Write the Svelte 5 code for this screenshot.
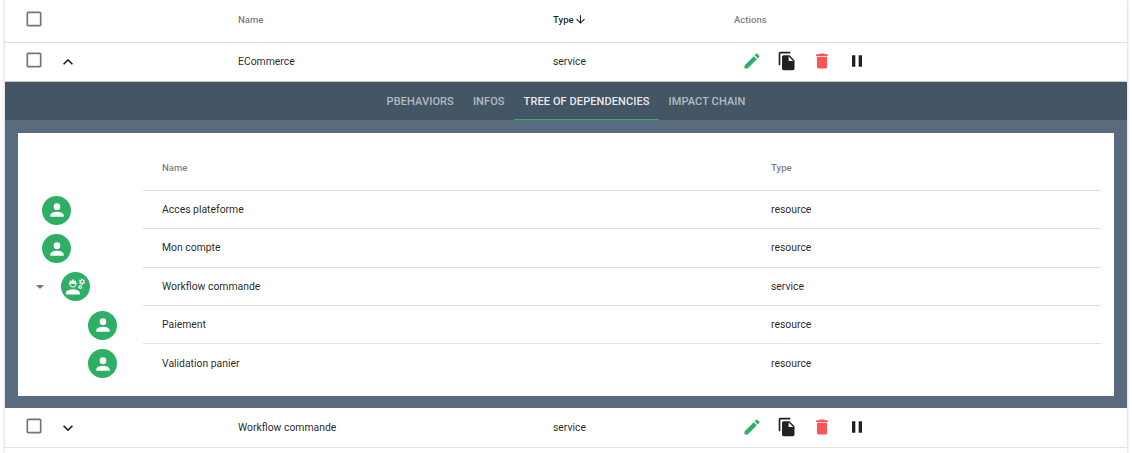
<script>
  const deps = [
    { name: 'Acces plateforme', type: 'resource', depth: 0 },
    { name: 'Mon compte', type: 'resource', depth: 0 },
    { name: 'Workflow commande', type: 'service', depth: 1, open: true },
    { name: 'Paiement', type: 'resource', depth: 2 },
    { name: 'Validation panier', type: 'resource', depth: 2 }
  ]
  const tabs = ['Pbehaviors', 'Infos', 'Tree of dependencies', 'Impact chain']
</script>

{#snippet checkbox()}
  <svg class="check" viewBox="0 0 24 24" width="20" height="20">
    <path fill="#757575" d="M19 5v14H5V5h14m0-2H5c-1.1 0-2 .9-2 2v14c0 1.1.9 2 2 2h14c1.1 0 2-.9 2-2V5c0-1.1-.9-2-2-2z" />
  </svg>
{/snippet}

{#snippet actions()}
  <div class="actions">
    <svg viewBox="0 0 24 24" width="20" height="20">
      <path fill="#2fae65" d="M3 17.25V21h3.75L17.81 9.94l-3.75-3.75L3 17.25zM20.71 7.04a1 1 0 0 0 0-1.41l-2.34-2.34a1 1 0 0 0-1.41 0l-1.83 1.83 3.75 3.75 1.83-1.83z" />
    </svg>
    <svg viewBox="0 0 24 24" width="20" height="20">
      <path fill="#212121" d="M16 1H4c-1.1 0-2 .9-2 2v14h2V3h12V1zm-1 4l6 6v10c0 1.1-.9 2-2 2H7.99C6.89 23 6 22.1 6 21l.01-14c0-1.1.89-2 1.99-2h7zm-1 7h5.5L14 6.5V12z" />
    </svg>
    <svg viewBox="0 0 24 24" width="20" height="20">
      <path fill="#ff5252" d="M6 19c0 1.1.9 2 2 2h8c1.1 0 2-.9 2-2V7H6v12zM19 4h-3.5l-1-1h-5l-1 1H5v2h14V4z" />
    </svg>
    <svg viewBox="0 0 24 24" width="20" height="20">
      <path fill="#212121" d="M6 19h4V5H6v14zm8-14v14h4V5h-4z" />
    </svg>
  </div>
{/snippet}

<div class="page">
  <div class="row head">
    <div class="c-check">{@render checkbox()}</div>
    <div class="c-name">Name</div>
    <div class="c-type sorted">
      Type
      <svg viewBox="0 0 24 24" width="13" height="13">
        <path fill="#212121" d="M20 12l-1.41-1.41L13 16.17V4h-2v12.17l-5.58-5.59L4 12l8 8 8-8z" />
      </svg>
    </div>
    <div class="c-actions">Actions</div>
  </div>

  <div class="row item open">
    <div class="c-check">{@render checkbox()}</div>
    <svg class="chev" viewBox="0 0 24 24" width="20" height="20">
      <path fill="#212121" d="M7.41 15.41L12 10.83l4.59 4.58L18 14l-6-6-6 6z" />
    </svg>
    <div class="c-name">ECommerce</div>
    <div class="c-type">service</div>
    {@render actions()}
  </div>

  <div class="expanded">
    <nav class="tabs">
      {#each tabs as tab}
        <span class="tab" class:active={tab === 'Tree of dependencies'}>{tab}</span>
      {/each}
    </nav>
    <div class="panel">
      <div class="card">
        <div class="tree">
          {#each deps as dep}
            <div class="node depth-{dep.depth}">
              {#if dep.open}<span class="caret"></span>{/if}
              <span class="avatar">
                {#if dep.type === 'service'}
                  <svg viewBox="0 0 24 24" width="21" height="21">
                    <path fill="#fff" d="M9 15c-2.67 0-8 1.34-8 4v2h16v-2c0-2.66-5.33-4-8-4zM4.74 9H5c0 2.21 1.79 4 4 4s4-1.79 4-4h.26c.27 0 .49-.22.49-.49v-.02c0-.27-.22-.49-.49-.49H13c0-1.48-.81-2.75-2-3.45v.95c0 .28-.22.5-.5.5s-.5-.22-.5-.5V4.14C9.68 4.06 9.35 4 9 4s-.68.06-1 .14V5.5c0 .28-.22.5-.5.5S7 5.78 7 5.5v-.95C5.81 5.25 5 6.52 5 8h-.26c-.27 0-.49.22-.49.49v.03c0 .26.22.48.49.48zM9 12c-1.4 0-2.6-1-2.9-3h5.8c-.3 2-1.5 3-2.9 3z" />
                    <path fill="#fff" d="M21.98 6.23l.93-.83-.75-1.3-1.19.39c-.14-.11-.3-.2-.47-.27L20.25 3h-1.5l-.25 1.22c-.17.07-.33.16-.48.27l-1.18-.39-.75 1.3.93.83c-.02.17-.02.35 0 .52l-.93.85.75 1.3 1.2-.38c.13.1.28.18.43.25l.28 1.23h1.5l.27-1.22c.16-.07.3-.15.44-.25l1.19.38.75-1.3-.93-.85c.03-.19.02-.36.01-.53zM19.5 7.75c-.69 0-1.25-.56-1.25-1.25s.56-1.25 1.25-1.25 1.25.56 1.25 1.25-.56 1.25-1.25 1.25z" />
                    <path fill="#fff" d="M19.4 10.79l-.85.28c-.1-.08-.21-.14-.33-.19l-.19-.88h-1.06l-.18.87c-.12.05-.24.12-.34.19l-.84-.28-.53.92.66.59c-.01.13-.01.25 0 .37l-.66.61.53.92.86-.27c.1.07.2.13.31.18l.2.88h1.06l.19-.87c.11-.05.22-.11.31-.18l.85.27.53-.92-.66-.61c.01-.13.01-.25 0-.37l.66-.59-.53-.92zM17.5 13.38c-.48 0-.88-.4-.88-.88s.4-.88.88-.88.88.4.88.88-.4.88-.88.88z" />
                  </svg>
                {:else}
                  <svg viewBox="0 0 24 24" width="20" height="20">
                    <path fill="#fff" d="M12 12a4 4 0 1 0 0-8 4 4 0 0 0 0 8zm0 2c-2.67 0-8 1.34-8 4v2h16v-2c0-2.66-5.33-4-8-4z" />
                  </svg>
                {/if}
              </span>
            </div>
          {/each}
        </div>
        <div class="deps">
          <div class="dep head-dep">
            <div class="d-name">Name</div>
            <div class="d-type">Type</div>
          </div>
          {#each deps as dep}
            <div class="dep">
              <div class="d-name">{dep.name}</div>
              <div class="d-type">{dep.type}</div>
            </div>
          {/each}
        </div>
      </div>
    </div>
  </div>

  <div class="row item last">
    <div class="c-check">{@render checkbox()}</div>
    <svg class="chev" viewBox="0 0 24 24" width="20" height="20">
      <path fill="#212121" d="M7.41 8.59L12 13.17l4.59-4.58L18 10l-6 6-6-6z" />
    </svg>
    <div class="c-name">Workflow commande</div>
    <div class="c-type">service</div>
    {@render actions()}
  </div>
</div>

<style>
  :global(body) {
    margin: 0;
    background: #fff;
    overflow: hidden;
  }
  .page {
    margin: 0 5px;
    font-family: Roboto, "Liberation Sans", sans-serif;
    font-size: 10.4px;
    color: rgba(0, 0, 0, 0.87);
    box-shadow: 0 0 3px rgba(0, 0, 0, 0.25);
    height: 453px;
  }
  .row {
    display: flex;
    align-items: center;
    border-bottom: 1px solid #e0e0e0;
  }
  .head {
    height: 38px;
    padding-bottom: 4px;
    font-size: 9.6px;
    font-weight: 500;
    color: rgba(0, 0, 0, 0.54);
  }
  .item {
    height: 37px;
    padding-bottom: 1px;
  }
  .item.open {
    border-bottom-color: #ccc;
  }
  .item.last {
    height: 39px;
    padding-bottom: 0;
  }
  .c-check {
    width: 20px;
    height: 20px;
    margin-left: 19px;
    margin-top: -3px;
  }
  .head .c-check {
    margin-top: -1px;
  }
  .check {
    display: block;
  }
  .chev {
    margin-left: 14px;
    flex: none;
  }
  .c-name {
    width: 315px;
    margin-left: 160px;
  }
  .head .c-name {
    margin-left: 194px;
  }
  .c-type {
    width: 181px;
  }
  .head .c-type {
    display: flex;
    align-items: center;
  }
  .sorted {
    color: rgba(0, 0, 0, 0.87);
  }
  .c-actions {
    color: rgba(0, 0, 0, 0.54);
  }
  .actions {
    display: flex;
    gap: 15px;
    margin-left: 8px;
    margin-top: -1px;
  }
  .expanded {
    background: #5a6b80;
  }
  .tabs {
    height: 38px;
    background: #445566;
    display: flex;
    justify-content: center;
  }
  .tab {
    display: flex;
    align-items: center;
    padding: 2px 9.5px 0;
    font-size: 11px;
    font-weight: 500;
    letter-spacing: 0.1px;
    text-transform: uppercase;
    color: rgba(255, 255, 255, 0.6);
    border-bottom: 1px solid transparent;
  }
  .tab.active {
    color: rgba(255, 255, 255, 0.9);
    border-bottom-color: #2fae65;
  }
  .panel {
    padding: 13px 13px 12px;
  }
  .card {
    background: #fff;
    height: 263px;
    display: flex;
    padding-right: 13px;
  }
  .tree {
    width: 125px;
    flex: none;
    padding-top: 58px;
  }
  .node {
    height: 38.4px;
    display: flex;
    align-items: center;
    position: relative;
  }
  .depth-0 .avatar { margin-left: 24px; }
  .depth-1 .avatar { margin-left: 43px; }
  .depth-2 .avatar { margin-left: 70px; }
  .avatar {
    width: 29px;
    height: 29px;
    border-radius: 50%;
    background: #2fae65;
    display: flex;
    align-items: center;
    justify-content: center;
  }
  .caret {
    position: absolute;
    left: 18px;
    top: 17px;
    border-left: 4.5px solid transparent;
    border-right: 4.5px solid transparent;
    border-top: 4.5px solid #757575;
  }
  .deps {
    flex: 1;
  }
  .dep {
    display: flex;
    align-items: center;
    height: 38.3px;
    box-sizing: border-box;
    border-top: 1px solid #e0e0e0;
  }
  .dep:last-child {
    padding-top: 1px;
  }
  .head-dep {
    height: 57px;
    padding-top: 11px;
    border-top: 0;
    font-size: 9.6px;
    font-weight: 500;
    color: rgba(0, 0, 0, 0.54);
  }
  .d-name {
    width: 628px;
    padding-left: 19px;
    box-sizing: border-box;
  }
</style>
